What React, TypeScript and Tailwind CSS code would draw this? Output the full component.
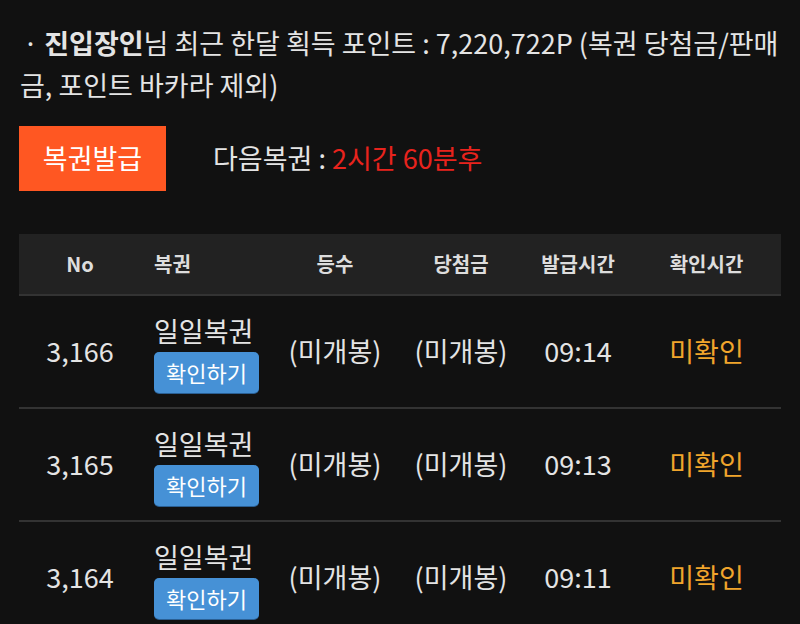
import React from 'react'

type Ticket = {
  no: string
  name: string
  rank: string
  prize: string
  issuedAt: string
  status: string
}

const tickets: Ticket[] = [
  { no: '3,166', name: '일일복권', rank: '(미개봉)', prize: '(미개봉)', issuedAt: '09:14', status: '미확인' },
  { no: '3,165', name: '일일복권', rank: '(미개봉)', prize: '(미개봉)', issuedAt: '09:13', status: '미확인' },
  { no: '3,164', name: '일일복권', rank: '(미개봉)', prize: '(미개봉)', issuedAt: '09:11', status: '미확인' },
]

const cols = 'grid grid-cols-[122px_131px_126px_126px_108px_149px]'

export default function App() {
  return (
    <main
      className="min-h-screen bg-[#111111] text-[#e4e4e4] px-[19px] pt-[22px] overflow-hidden"
      style={{ fontFamily: '"Noto Sans CJK KR", "Noto Sans", sans-serif' }}
    >
      {/* Summary */}
      <p className="text-[27px] leading-[42px] pl-[1px] indent-[3px]">
        · <b className="font-bold">진입장인</b>님 최근 한달 획득 포인트 : 7,220,722P (복권 당첨금/판매금, 포인트 바카라 제외)
      </p>

      {/* Issue */}
      <div className="mt-[20px] flex items-center">
        <button className="w-[147px] h-[65px] bg-[#ff5722] text-white text-[27px]">복권발급</button>
        <div className="ml-[47px] text-[27px]">
          다음복권 : <span className="text-[#e8231d]">2시간 60분후</span>
        </div>
      </div>

      {/* Ticket list */}
      <div className="mt-[43px] w-[762px]">
        <div className={`${cols} h-[62px] items-center bg-[#222222] border-b-2 border-[#333333] text-[20px] font-bold text-[#dddddd]`}>
          <div className="text-center">No</div>
          <div className="pl-[13px]">복권</div>
          <div className="text-center">등수</div>
          <div className="text-center">당첨금</div>
          <div className="text-center">발급시간</div>
          <div className="text-center">확인시간</div>
        </div>
        {tickets.map((t) => (
          <div key={t.no} className={`${cols} h-[113px] items-center border-b-2 border-[#333333] text-[27px]`}>
            <div className="text-center">{t.no}</div>
            <div className="pl-[13px] pt-[6px] flex flex-col items-start">
              <span className="leading-[30px]">{t.name}</span>
              <button className="mt-[6px] w-[105px] h-[41px] rounded-[5px] bg-[#4691d6] text-white text-[22px] shadow-[0_1px_0_#2a5f93]">
                확인하기
              </button>
            </div>
            <div className="text-center">{t.rank}</div>
            <div className="text-center">{t.prize}</div>
            <div className="text-center">{t.issuedAt}</div>
            <div className="text-center text-[#f0a52c]">{t.status}</div>
          </div>
        ))}
      </div>
    </main>
  )
}
